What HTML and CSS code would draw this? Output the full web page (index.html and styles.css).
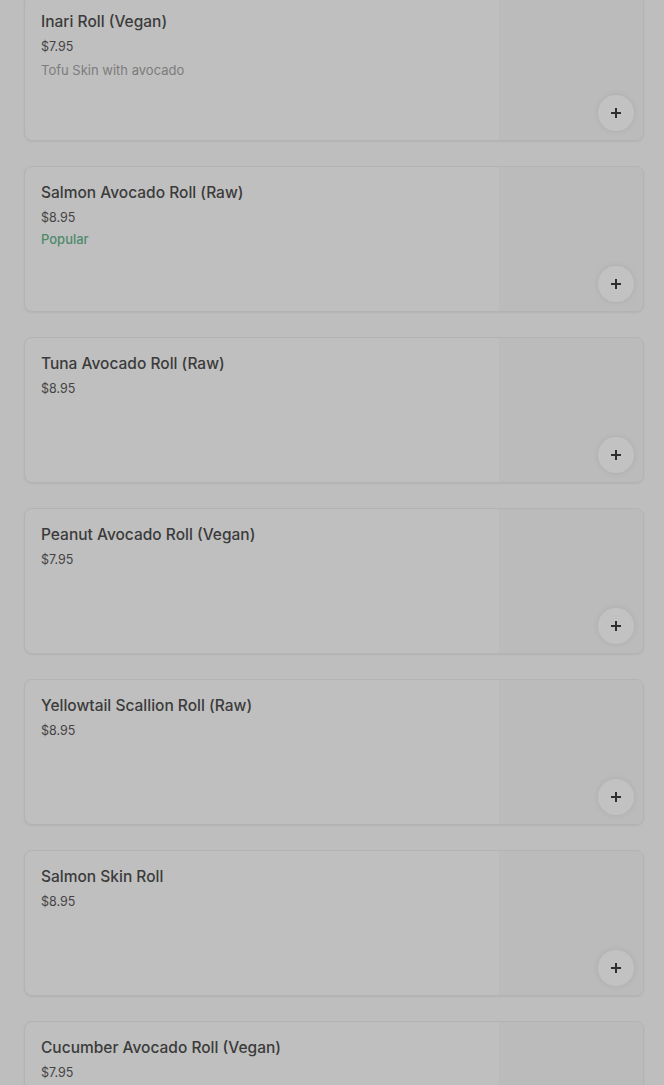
FILE: index.html
```html
<!DOCTYPE html>
<html lang="en">
	<head>
		<title>Menu</title>
		<link rel="stylesheet" href="styles.css">
	</head>
	<body>
		<div class="list">
			<div class="item">
				<div class="info">
					<h3>Inari Roll (Vegan)</h3>
					<div class="price">$7.95</div>
					<div class="desc">Tofu Skin with avocado</div>
				</div>
				<div class="pic"><span class="add"><svg viewBox="0 0 12 12" width="12" height="12"><path d="M6 1v10M1 6h10" stroke="#2e2e2e" stroke-width="2"/></svg></span></div>
			</div>
			<div class="item">
				<div class="info">
					<h3>Salmon Avocado Roll (Raw)</h3>
					<div class="price">$8.95</div>
					<div class="tag">Popular</div>
				</div>
				<div class="pic"><span class="add"><svg viewBox="0 0 12 12" width="12" height="12"><path d="M6 1v10M1 6h10" stroke="#2e2e2e" stroke-width="2"/></svg></span></div>
			</div>
			<div class="item">
				<div class="info">
					<h3>Tuna Avocado Roll (Raw)</h3>
					<div class="price">$8.95</div>
				</div>
				<div class="pic"><span class="add"><svg viewBox="0 0 12 12" width="12" height="12"><path d="M6 1v10M1 6h10" stroke="#2e2e2e" stroke-width="2"/></svg></span></div>
			</div>
			<div class="item">
				<div class="info">
					<h3>Peanut Avocado Roll (Vegan)</h3>
					<div class="price">$7.95</div>
				</div>
				<div class="pic"><span class="add"><svg viewBox="0 0 12 12" width="12" height="12"><path d="M6 1v10M1 6h10" stroke="#2e2e2e" stroke-width="2"/></svg></span></div>
			</div>
			<div class="item">
				<div class="info">
					<h3>Yellowtail Scallion Roll (Raw)</h3>
					<div class="price">$8.95</div>
				</div>
				<div class="pic"><span class="add"><svg viewBox="0 0 12 12" width="12" height="12"><path d="M6 1v10M1 6h10" stroke="#2e2e2e" stroke-width="2"/></svg></span></div>
			</div>
			<div class="item">
				<div class="info">
					<h3>Salmon Skin Roll</h3>
					<div class="price">$8.95</div>
				</div>
				<div class="pic"><span class="add"><svg viewBox="0 0 12 12" width="12" height="12"><path d="M6 1v10M1 6h10" stroke="#2e2e2e" stroke-width="2"/></svg></span></div>
			</div>
			<div class="item">
				<div class="info">
					<h3>Cucumber Avocado Roll (Vegan)</h3>
					<div class="price">$7.95</div>
				</div>
				<div class="pic"><span class="add"><svg viewBox="0 0 12 12" width="12" height="12"><path d="M6 1v10M1 6h10" stroke="#2e2e2e" stroke-width="2"/></svg></span></div>
			</div>
		</div>
	</body>
</html>
```
FILE: styles.css
```css
body, html {
	margin:0;
	padding:0;
	font-family:Inter,Roboto,"Liberation Sans",sans-serif;
	background-color:#bebebe;
	color:#3a3a3a;
	overflow:hidden;
}
.list {
	display:flex;
	flex-direction:column;
	gap:25px;
	margin-top:-5px;
	padding:0 20px 0 24px;
}
.item {
	display:flex;
	height:144px;
	border:1px solid #b3b3b3;
	border-radius:8px;
	background-color:#bfbfbf;
	box-shadow:0 1px 2px rgba(0,0,0,0.06);
	overflow:hidden;
}
.info {
	flex:1;
	padding:16px 16px 0 16px;
}
h3 {
	margin:0;
	font-size:15.5px;
	line-height:20px;
	font-weight:500;
	color:#3b3b3b;
}
.price {
	margin-top:6px;
	font-size:12.5px;
	line-height:18px;
	color:#444;
}
.desc {
	margin-top:5px;
	font-size:13px;
	line-height:18px;
	color:#7c7c7c;
}
.tag {
	margin-top:3px;
	font-size:13px;
	line-height:18px;
	font-weight:500;
	color:#4f8a6b;
}
.pic {
	position:relative;
	width:143px;
	background-color:#bbbbbb;
	border-left:1px solid #bababa;
}
.add {
	position:absolute;
	right:9px;
	bottom:9px;
	display:flex;
	align-items:center;
	justify-content:center;
	width:36px;
	height:36px;
	border-radius:50%;
	background-color:#c2c2c2;
	box-shadow:0 0 6px rgba(0,0,0,0.08);
}
```
